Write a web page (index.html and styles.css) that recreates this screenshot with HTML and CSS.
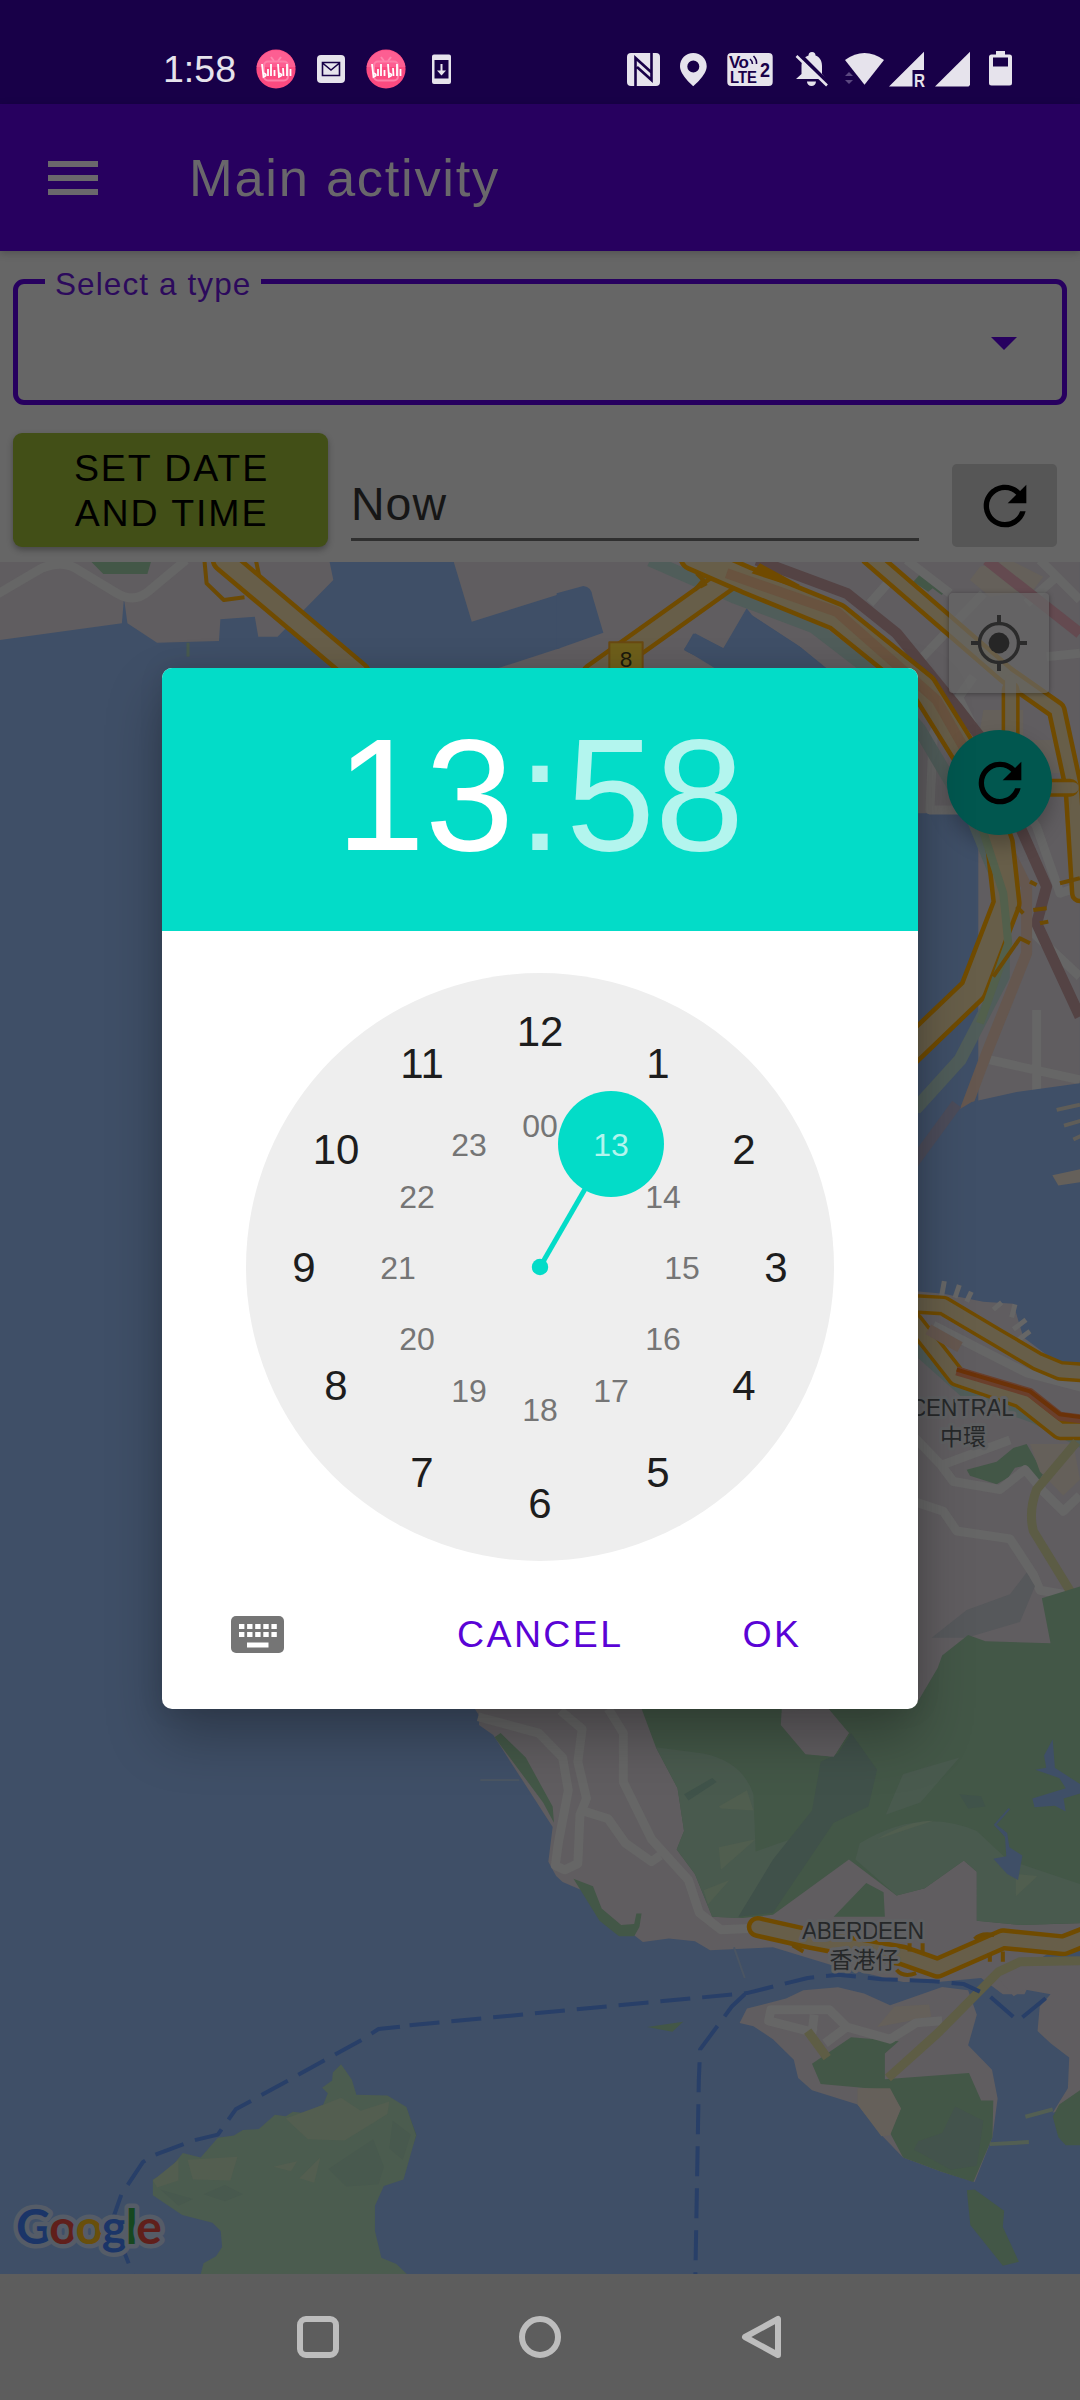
FILE: index.html
```html
<!DOCTYPE html>
<html lang="en">
<head>
<meta charset="utf-8">
<title>Main activity</title>
<link rel="stylesheet" href="styles.css">
</head>
<body>
<div class="screen">
  <header class="status-bar">
    <span class="clock">1:58</span>
    <div class="status-left">
      <svg width="54" height="50" viewBox="249 44 54 50">
        <g id="bili">
          <circle cx="276" cy="69" r="19.6" fill="#fb4a80"/>
          <path d="M256.6 67a19.6 19.6 0 0 1 38.800 0z" fill="#fd5e92"/>
          <path d="M271 57l3 4M281 57l-3 4" stroke="#fd86ad" stroke-width="2"/>
          <rect x="264" y="61.500" width="24" height="19" rx="4" fill="none" stroke="#fd7fa8" stroke-width="2"/>
          <path d="M262 64l1.500 13q5-2 0-4M268 69v7M271 64v12M274.500 70v6M278 64l1 13q5-2 0-4M283 68l.5 8M287 64v12M290.500 69v7" fill="none" stroke="#fff" stroke-width="1.800"/>
        </g>
      </svg>
      <svg width="56" height="50" viewBox="303 44 56 50">
        <rect x="317" y="55" width="28" height="28" rx="4" fill="#e6e3ec"/>
        <path d="M322.500 62.500h17v13h-17zM322.500 63l8.500 7 8.500-7" fill="none" stroke="#180048" stroke-width="1.600"/>
      </svg>
      <svg width="54" height="50" viewBox="249 44 54 50"><use href="#bili"/></svg>
      <svg width="60" height="50" viewBox="413 44 60 50">
        <path d="M434 54.500h15a2 2 0 0 1 2 2v25.500a2 2 0 0 1-2 2h-15a2 2 0 0 1-2-2V56.500a2 2 0 0 1 2-2zM434.500 60v18.500h14V60z" fill="#e6e3ec" fill-rule="evenodd"/>
        <path d="M441.500 64v8" stroke="#e6e3ec" stroke-width="2"/><path d="M437 70.500h9l-4.500 5z" fill="#e6e3ec"/>
      </svg>
    </div>
    <div class="status-right">
      <svg width="50" height="50" viewBox="620 44 50 50">
        <rect x="627" y="53" width="33" height="33" rx="4" fill="#e6e3ec"/>
        <path d="M635.500 86V58l15.500 14M651.500 53v27L637 67" fill="none" stroke="#180048" stroke-width="2.600"/>
      </svg>
      <svg width="50" height="50" viewBox="670 44 50 50">
        <path d="M693.300 53c-7.500 0-13.300 5.800-13.300 13.300 0 9 13.300 19.900 13.300 19.900s13.400-10.900 13.400-19.900c0-7.500-5.900-13.300-13.400-13.300zm0 7.500a6 6 0 1 1 0 12 6 6 0 0 1 0-12z" fill="#e6e3ec"/>
      </svg>
      <svg class="volte" width="66" height="50" viewBox="720 44 66 50">
        <rect x="727.300" y="53" width="45.400" height="33" rx="4" fill="#e6e3ec"/>
        <text x="729" y="68" font-size="17" textLength="20">Vo</text>
        <text x="730" y="82.500" font-size="16.500" textLength="27" lengthAdjust="spacingAndGlyphs">LTE</text>
        <text x="760" y="77" font-size="21" textLength="10" lengthAdjust="spacingAndGlyphs">2</text>
        <path d="M750 59q2.500 2 2.500 5M753.500 56q3.500 3.500 3 8" fill="none" stroke="#180048" stroke-width="1.600"/>
      </svg>
      <svg width="50" height="50" viewBox="786 44 50 50">
        <path d="M796 79h30l-4-5V66c0-6-3-9.500-6.500-10.500a3.500 3.500 0 0 0-7 0C804 57 801.500 61 801.500 66v8z" fill="#e6e3ec"/>
        <path d="M807 81.500h9a4.500 4.500 0 0 1-9 0z" fill="#e6e3ec"/>
        <path d="M798.500 53.500l31 31" stroke="#180048" stroke-width="4"/>
        <path d="M796.500 56l30.500 29.500" stroke="#e6e3ec" stroke-width="2.600"/>
      </svg>
      <svg width="52" height="50" viewBox="838 44 52 50">
        <path d="M866.500 84.700L847 60q19.500-14 39 0z" fill="#e6e3ec"/>
        <path d="M847 76l4-4 4 4zM847 80l4 4 4-4z" fill="#5b4880"/>
      </svg>
      <svg width="42" height="50" viewBox="890 44 42 50">
        <path d="M926 51.700V70H914.500V86.500H891z" fill="#e6e3ec"/>
        <text x="916" y="86.500" font-size="18" font-weight="bold" fill="#e6e3ec" textLength="11" lengthAdjust="spacingAndGlyphs">R</text>
      </svg>
      <svg width="50" height="50" viewBox="932 44 50 50">
        <path d="M972 51.700V85l-1.500 1.500H937z" fill="#e6e3ec"/>
      </svg>
      <svg width="40" height="50" viewBox="982 44 40 50">
        <path d="M998 51h9v3.500h4.500a2.500 2.500 0 0 1 2.500 2.500v26a2.500 2.500 0 0 1-2.500 2.500h-18a2.500 2.500 0 0 1-2.500-2.500V57a2.500 2.500 0 0 1 2.500-2.500h4.500zM995 57.500v9h15v-9z" fill="#e6e3ec" fill-rule="evenodd"/>
      </svg>
    </div>
  </header>

  <div class="app-bar">
    <div class="menu-icon"><i></i><i></i><i></i></div>
    <h1>Main activity</h1>
  </div>

  <section class="form">
    <div class="select">
      <span class="select-label">Select a type</span>
      <span class="arrow"></span>
    </div>
    <div class="row">
      <div class="date-button">SET DATE<br>AND TIME</div>
      <div class="date-field">Now</div>
      <div class="refresh">
        <svg width="64" height="64" viewBox="0 0 24 24"><path id="refresh-path" d="M17.650 6.350C16.200 4.900 14.210 4 12 4c-4.420 0-7.990 3.580-7.990 8s3.570 8 7.990 8c3.730 0 6.840-2.550 7.730-6h-2.080c-.82 2.330-3.040 4-5.650 4-3.310 0-6-2.690-6-6s2.690-6 6-6c1.660 0 3.140.69 4.220 1.780L13 11h7V4l-2.350 2.350z"/></svg>
      </div>
    </div>
  </section>

  <main class="map">
    <svg class="map-canvas" width="1080" height="1712" viewBox="0 562 1080 1712">
      <defs>
        <path id="bridge" d="M325 0L520 340"/>
        <path id="highway8" d="M500 60L100 345"/>
        <path id="coast-road" d="M400 -10L560 60L830 170L1090 380L1240 620L1320 850L1340 1030L1240 1290L1000 1520"/>
        <path id="inland-road" d="M930 -10L1340 345L1490 450L1540 680L1560 1000"/>
        <path id="central-road" d="M30 515L130 520L290 600L410 660L480 685L560 690"/>
        <path id="central-south" d="M40 560L170 700L360 755L480 835L560 835"/>
        <path id="aberdeen" d="M825 605L950 635L1050 655L1160 675L1240 705L1390 635L1530 650L1590 625"/>
      </defs>

      <!-- Tsing Yi and the container terminals -->
      <g transform="translate(0 560) scale(.6887 .3333)">
        <path class="land" d="M0 0H478L484 60L403 230L375 230L370 170L320 178L318 243L228 248L185 190L180 115L177 190L0 240z"/>
        <path class="land" d="M658 0H1000L1080 100L1060 260L1000 215L990 270L1060 330H715L876 222L855 75L685 185z"/>
        <path class="park" d="M130 0H220L214 42H150z"/>
        <path class="street w12" d="M-10 110L60 25Q90 0 110 25L170 100Q195 130 215 95L270 0M840 0L870 40L925 5M895 45L925 240"/>
        <path class="green-line" d="M273 248V290"/>
        <path class="edge-line" d="M297 5L300 70L325 120L355 112M372 5L376 45L355 80"/>
        <use href="#bridge" class="edge e26"/><use href="#bridge" class="fill f18"/>
      </g>

      <!-- Kowloon -->
      <g transform="translate(560 560) scale(.3333)">
        <path class="land" d="M550 0H1560V2300L1440 2370L1160 2400L1000 2600V2040H1255V760H1060L1000 500L800 325L720 260L575 165L490 265L400 220L372 270L470 330H100L0 300V0z"/>
        <path class="water" d="M560 145L490 265L405 220L372 268L470 328H800L720 260L580 170z"/>
        <path class="water" d="M-10 100L70 78Q95 80 98 110L130 218L-10 268z"/>
        <path class="park" d="M1060 65L1090 32L1155 95L1145 105L1118 85L1105 95z"/>
        <path class="block" d="M1260 20L1230 60L1290 110L1420 90L1450 50L1350 0zM1270 450h120v90h150l-30 100h-90L1260 510z"/>
        <path class="street w12" d="M1040 0L1170 100M930 130L1010 40M1560 120L1490 50L1400 130M1080 300L1270 100M1490 50L1440 0M1240 350L1120 520L1110 750H1250M1460 290L1560 280M1200 420L1260 540L1430 800L1500 1000L1560 980M1400 1100L1560 1250M1430 1350V1900M1290 1500L1560 1560M1180 1860L1560 1890"/>
        <path class="rail-teal" d="M270 0L520 110L760 200L930 330L1080 510L1240 780L1330 1000L1330 1250L1200 1500L1000 1720"/>
        <path class="rail-brown" d="M590 0L860 100L1010 220L1190 440L1260 530L1380 800L1460 980L1430 1090L1560 1370"/>
        <path class="rail-red" d="M1280 0L1560 220"/>
        <path class="rail-tan" d="M1310 800L1400 980L1400 1180L1280 1480L1160 1800L1000 2050"/>
        <use href="#highway8" class="edge e26"/><use href="#highway8" class="fill f18"/>
        <use href="#coast-road" class="edge e30"/><use href="#coast-road" class="fill f22"/>
        <path class="tan-road" d="M500 40L830 155L1130 420L1210 560"/>
        <path class="teal-over" d="M1265 800L1330 1000L1345 1150L1260 1390"/>
        <use href="#inland-road" class="edge e20"/><use href="#inland-road" class="fill f12"/>
        <path class="edge e18" d="M1352 390V560M1470 683H1530"/><path class="fill f12" d="M1352 360V570M1470 683H1540"/>
        <path class="edge-line" d="M410 40L430 60L405 90M440 70L420 80M1300 1250L1380 1135L1410 1150M1370 1040L1390 1060M1500 970L1560 955M1410 965L1430 975M1420 1050L1460 1045M1440 1090L1465 1085"/>
        <path d="M600 10L720 75L700 80L575 40z" fill="#704a00"/>
        <path d="M148 247H248V330H148z" fill="#6e5f1b" stroke="#694911" stroke-width="2"/>
        <text x="198" y="322" font-size="68" text-anchor="middle" fill="#1b1a0d">8</text>
      </g>

      <!-- Victoria Harbour and Central -->
      <g transform="translate(900 1100) scale(.3333 .3954)">
        <path class="water" d="M0 33H160L215 5L350 -20L560 -45V700H480L370 640L300 590L180 520L0 480z"/>
        <path class="rail-tan faint" d="M40 160L170 10"/>
        <path class="street-tan w4" d="M470 25L540 12M492 65L545 52M520 100L550 88"/>
        <path class="block" d="M457 190L540 175V208L475 216z"/>
        <path class="land" d="M0 480L130 490L250 510L340 515L370 600L480 670L560 680V1700H0z"/>
        <path class="street w6" d="M125 495L133 458M165 500L178 468M200 510L214 485M280 530L305 512M335 550L345 517M340 580L378 556M350 610L390 585"/>
        <path class="rail-teal" d="M40 620L200 740L400 800L560 870"/>
        <path class="street w12" d="M100 570L380 690L560 730"/>
        <use href="#central-road" class="edge e20"/><use href="#central-road" class="fill f14"/>
        <use href="#central-south" class="edge e20"/><use href="#central-south" class="fill f14"/>
        <path d="M170 685L390 740L480 800L560 808" fill="none" stroke="#6a3f2c" stroke-width="9"/>
        <path d="M170 682L390 737L480 795L560 804" fill="none" stroke="#6b3208" stroke-width="4"/>
        <path class="rail-tan" d="M85 580L180 625"/>
        <path class="park" d="M200 935L290 915L340 880L380 870L430 945L415 965L375 925L345 930L325 955L290 972L210 950z"/>
        <path class="block" d="M390 870L520 870L540 960L490 1000L420 940z"/>
        <path class="street w14" d="M40 850L120 920L160 965L300 985L375 935L430 990L490 1040L540 1000M120 925L330 860M40 1015L130 1040L170 1090L330 1110L400 1200L420 1240L560 1260"/>
        <path d="M530 865L410 985Q385 1040 400 1090L560 1310" fill="none" stroke="#5c5c45" stroke-width="9"/>
        <path d="M95 1360L200 1290L330 1250L380 1195L405 1230L360 1320L200 1360z" fill="#56585b"/>
      </g>

      <!-- Hong Kong Island -->
      <g transform="translate(400 1680) scale(.4337 .4082)">
        <path class="land" d="M160 50H1600V600L1480 680L1440 770L1390 770L1340 730L1240 740L1160 740L1000 700L860 655L715 662L680 640L620 633L560 642L540 625L460 580L430 520L375 495L360 480L342 445L352 360L215 135L182 110L183 88z"/>
        <path class="park" d="M550 50H880V110L935 180L1000 188L1035 130L980 60H1190L1240 -30L1250 -60L1310 -110L1350 -95L1500 -90L1480 -200L1600 -240V595L1430 600L1330 590V470L1300 442L1210 510L1145 528L1035 440L860 575L790 583L720 580L680 475L638 415L655 370L640 265L590 165z"/>
        <path d="M590 165L700 180Q790 200 815 280L820 420L900 390L780 583L720 580L680 475L638 415L655 370L640 265zM1060 400Q1200 310 1330 370L1400 440L1568 500V595L1430 600L1330 590V470L1300 442L1210 510L1145 528L1050 440zM1290 190L1200 300L1120 330L1160 230z" fill="#495a4e"/>
        <path d="M1040 130L1100 220L1080 310L1000 350L860 570L780 580L860 440L950 320L970 200L1010 180z" fill="#40514a"/>
        <path d="M1290 280l50 5l10 25l-40 5zM655 280L720 240L730 250L665 295z" fill="#40534a"/>
        <path d="M735 410L820 390L740 465zM700 515L760 490L710 550zM735 310L800 270L815 320L740 315zM1100 390Q1170 345 1230 345L1130 380zM1420 475l50 5l-50 50z" fill="#505e4f"/>
        <path class="land" d="M880 80L975 70L1035 130L1000 188L935 182L878 110z"/>
        <path class="park" d="M232 130L290 190L352 310L355 350L330 300L218 140zM400 487L445 505L465 560L510 600L540 598L545 572H557L552 605L540 628L505 628L460 590zM1000 580L1075 497L1115 520L1118 580z"/>
        <path class="water" d="M1505 145L1485 185L1490 215L1465 220L1520 240L1535 265L1458 290L1463 312L1510 308L1535 322L1530 290L1568 278V255L1510 215zM1370 350L1400 375L1405 410L1435 430L1425 490L1400 475L1368 438L1398 432L1395 385z"/>
        <path d="M1405 315L1372 355L1395 380" fill="none" stroke="#3f4f67" stroke-width="2"/>
        <path class="street w12" d="M180 90L320 130L375 190L388 270L365 400L358 455L380 465L410 450L415 330L430 290L410 200L420 120L370 75M480 70L515 130L515 250L580 390L665 490L690 570L740 612L820 608M420 320L480 340L520 400L580 445L600 430"/>
        <path d="M770 655L795 730M185 245H275" fill="none" stroke="#4a5563" stroke-width="2"/>
        <use href="#aberdeen" class="edge e22"/><use href="#aberdeen" class="fill f14"/>
        <path class="edge-line" d="M905 650L930 665M1145 710Q1160 730 1190 718M1325 635Q1340 618 1370 625M1205 645V670M1175 645V665M1360 690V670M1390 690V665"/>

        <!-- Ap Lei Chau -->
        <path class="land" d="M783 840L800 805L890 780L930 760L1010 753L1070 768L1130 797L1250 752L1310 760L1330 820L1310 895L1365 955L1378 1025L1366 1120L1325 1230L1250 1205L1160 1170L1115 1120L1055 1040L950 1005L918 975L908 930L860 880L815 848z"/>
        <path class="land" d="M1370 720L1420 690L1568 680V1040L1505 1060L1540 1000L1543 925L1500 890L1470 860L1475 800L1500 770L1440 758L1415 775z"/>
        <path class="park" d="M950 940L1040 875L1150 885L1118 915V978L1312 963L1340 1030H1368L1366 1120L1322 1230L1250 1205L1160 1170L1130 1110L1155 1050L1130 1005L970 990z"/>
        <path d="M1280 1045L1345 1080L1330 1190L1270 1200L1185 1150L1195 1130L1250 1110z" fill="#43534c"/>
        <path class="block" d="M1055 1000H1130L1155 1050L1130 1115L1110 1118L1055 1040zM1100 850L1140 800L1220 795L1225 825z"/>
        <path class="street w12" d="M960 865L850 835L855 808H990L1030 850L1130 880L1190 840L1250 835M950 865L955 820M980 890L1030 850"/>
        <path d="M1125 975L1240 865L1380 715L1430 690L1568 688M940 860L985 925" fill="none" stroke="#5e5d45" stroke-width="9"/>
        <path class="park" d="M1307 1250L1325 1248L1393 1300L1390 1340L1427 1425L1390 1435L1315 1335zM570 850L653 837L628 862zM1568 1005L1520 1040L1505 1070L1518 1120L1535 1140H1568zM0 1040L15 1050L38 1115L0 1225z"/>
        <path d="M1360 1137L1450 1132M1442 1070L1505 1052" fill="none" stroke="#535f53" stroke-width="4"/>
        <path class="ferry" d="M22 846L800 767L940 730L1010 722L1110 733L1230 738L1300 745L1360 775L1425 835L1500 770M795 770L765 800L692 905L689 980L681 1460"/>
      </g>

      <!-- Lamma Island -->
      <g transform="translate(0 1680) scale(.3571 .4592)">
        <path class="park2" d="M562 1294L570 1270L605 1255L622 1235L618 1200L595 1182L510 1165L428 1122V1088L470 1070L512 1030L562 1040L610 997L655 992L680 980L725 978L770 947L800 950L820 940L850 943L905 925L918 900L902 888L930 872L932 855L955 837L985 870L998 903L1085 905L1138 930L1165 992L1130 1088L1075 1102L1050 1145V1200L1068 1258L1110 1272L1140 1294z"/>
        <path d="M800 955L905 925L955 910L1010 938L1090 918L1085 945L965 1003L862 1000zM525 1045L665 1038L645 1090L540 1088zM765 1060L832 1048L815 1070zM838 1085L897 1040L880 1095zM428 1090L500 1045V1090L440 1105z" fill="#535e50"/>
        <path d="M920 1065L1045 1000L1075 1060L1060 1098L970 1103zM450 1110L540 1130L500 1145zM1100 960L1150 990L1128 1045L1090 1020zM570 1120l60-20l50 20l-50 15z" fill="#48594e"/>
        <path class="ferry" d="M1120 755L1060 760L1010 785L660 935L610 990L540 1003L430 1035L400 1050L340 1120L320 1165L330 1210L375 1300"/>
      </g>

      <g class="place">
        <text x="962" y="1416" textLength="104">CENTRAL</text>
        <text x="963" y="1445">中環</text>
        <text x="863" y="1939" textLength="122">ABERDEEN</text>
        <text x="864" y="1968">香港仔</text>
      </g>
      <text class="logo" x="16" y="2244" textLength="146"><tspan fill="#1b3568">G</tspan><tspan fill="#601f1b">o</tspan><tspan fill="#694f0b">o</tspan><tspan fill="#1b3568">g</tspan><tspan fill="#16471f">l</tspan><tspan fill="#601f1b">e</tspan></text>
    </svg>
    <div class="locate">
      <svg width="56" height="56" viewBox="0 0 56 56"><circle cx="28" cy="28" r="19.500" fill="none" stroke="#2b2b2b" stroke-width="3.400"/><circle cx="28" cy="28" r="10.400" fill="#262626"/><path d="M28 0v8M28 48v8M0 28h8M48 28h8" stroke="#2b2b2b" stroke-width="4"/></svg>
    </div>
    <div class="fab"><svg width="64" height="64" viewBox="0 0 24 24"><use href="#refresh-path"/></svg></div>
  </main>

  <nav class="nav-bar">
    <svg width="44" height="50" viewBox="297 2312 44 50"><rect x="301" y="2319" width="36" height="36" rx="6" fill="none" stroke="#bdbdbd" stroke-width="6"/></svg>
    <svg width="44" height="50" viewBox="518 2312 44 50"><circle cx="540" cy="2337" r="18" fill="none" stroke="#bdbdbd" stroke-width="6"/></svg>
    <svg width="44" height="50" viewBox="741 2312 44 50"><path d="M746 2337L779 2319V2355z" fill="none" stroke="#bdbdbd" stroke-width="6" stroke-linejoin="round"/></svg>
  </nav>

  <div class="dialog">
    <div class="time"><span class="hour">13</span><span class="colon">:</span><span class="minute">58</span></div>
    <div class="picker">
      <svg class="dial" width="588" height="588" viewBox="-294 -294 588 588">
        <circle r="294" fill="#eee"/>
        <g class="outer">
          <text x="0" y="-221">12</text><text x="118" y="-189">1</text><text x="204" y="-103">2</text>
          <text x="236" y="15">3</text><text x="204" y="133">4</text><text x="118" y="220">5</text>
          <text x="0" y="251">6</text><text x="-118" y="220">7</text><text x="-204" y="133">8</text>
          <text x="-236" y="15">9</text><text x="-204" y="-103">10</text><text x="-118" y="-189">11</text>
        </g>
        <g class="inner">
          <text x="0" y="-130">00</text><text x="123" y="-59">14</text><text x="142" y="12">15</text>
          <text x="123" y="83">16</text><text x="71" y="135">17</text><text x="0" y="154">18</text>
          <text x="-71" y="135">19</text><text x="-123" y="83">20</text><text x="-142" y="12">21</text>
          <text x="-123" y="-59">22</text><text x="-71" y="-111">23</text>
        </g>
        <path d="M0 0L71-123" stroke="#03dcc8" stroke-width="5"/>
        <circle r="8.200" fill="#03dcc8"/>
        <circle cx="71" cy="-123" r="53" fill="#03dcc8"/>
        <g class="inner chosen"><text x="71" y="-111">13</text></g>
      </svg>
    </div>
    <div class="actions">
      <svg class="keyboard" width="53" height="37" viewBox="0 0 53 37">
        <rect width="53" height="37" rx="5" fill="#757575"/>
        <path d="M8 10.500h38M8 18.500h38" stroke="#fff" stroke-width="5.200" stroke-dasharray="5.400 2.700"/>
        <path d="M16 29h21.500" stroke="#fff" stroke-width="5"/>
      </svg>
      <span class="cancel">CANCEL</span>
      <span class="ok">OK</span>
    </div>
  </div>
</div>
</body>
</html>
```
FILE: styles.css
```css
* { box-sizing: border-box; }
body {
  margin: 0;
  font-family: "Liberation Sans", "Noto Sans CJK TC", sans-serif;
  background: #666;
}
svg { display: block; flex: none; }
.screen {
  position: relative;
  width: 1080px;
  height: 2400px;
  overflow: hidden;
  display: flex;
  flex-direction: column;
}
.status-bar {
  height: 104px;
  background: #180048;
  display: flex;
  align-items: flex-start;
  padding: 44px 60px 0 163px;
}
.clock { width: 86px; font-size: 37.5px; line-height: 50px; color: #e6e3ec; }
.status-left, .status-right { display: flex; }
.status-right { margin-left: auto; }
.volte { font-weight: bold; }
.volte text { fill: #180048; }

.app-bar {
  position: relative;
  z-index: 1;
  height: 147px;
  background: #27005f;
  display: flex;
  align-items: center;
  padding-left: 48px;
  box-shadow: 0 2px 8px rgba(0, 0, 0, .22);
}
.menu-icon { width: 50px; display: grid; gap: 8.5px; margin-bottom: -1px; }
.menu-icon i { height: 5.5px; background: #6a686c; }
.app-bar h1 {
  margin: 0 0 0 91px;
  font-size: 52.5px;
  line-height: 60px;
  font-weight: 400;
  letter-spacing: 1.7px;
  color: #69676b;
}

.form {
  height: 311px;
  background: #666;
  padding: 28px 13px 0;
}
.select {
  position: relative;
  height: 126px;
  border: 5px solid #27005f;
  border-radius: 11px;
  display: flex;
  align-items: center;
  justify-content: flex-end;
  padding-right: 45px;
}
.select-label {
  position: absolute;
  left: 27px;
  top: -18px;
  padding: 0 10px 0 10px;
  font-size: 31.5px;
  line-height: 36px;
  letter-spacing: 1.1px;
  color: #2c0a5c;
  background: #666;
}
.arrow {
  border: 13px solid transparent;
  border-top-color: #27005f;
  border-bottom: 0;
  margin-top: 2px;
}
.row { display: flex; align-items: flex-end; margin-top: 28px; }
.date-button {
  width: 315px;
  height: 114px;
  padding: 13px 0 0 2px;
  border-radius: 9px;
  background: #424f17;
  box-shadow: 0 3px 6px rgba(0, 0, 0, .3);
  font-size: 37.5px;
  line-height: 45px;
  letter-spacing: 1.9px;
  text-align: center;
  color: #000;
}
.date-field {
  width: 568px;
  height: 66px;
  margin: 0 33px 6px 23px;
  border-bottom: 3px solid #2f2f2f;
  padding: 6px 0 0 0;
  font-size: 46.5px;
  line-height: 46px;
  letter-spacing: 1px;
  color: #161616;
}
.refresh {
  width: 105px;
  height: 83px;
  border-radius: 5px;
  background: #565656;
  display: flex;
  align-items: center;
  justify-content: center;
}

.map { position: relative; height: 1712px; background: #3f4f67; overflow: hidden; }
.map-canvas path { vector-effect: non-scaling-stroke; stroke-linejoin: round; }
.land { fill: #605d60; }
.water { fill: #3f4f67; }
.park { fill: #435747; }
.park2 { fill: #4b5c4f; }
.block { fill: #65605a; }
.street, .street-tan { fill: none; stroke: #666; }
.street-tan { stroke: #5f5d58; }
.green-line { fill: none; stroke: #485a4f; stroke-width: 3; }
.w4 { stroke-width: 4; }
.w6 { stroke-width: 5; }
.w12 { stroke-width: 9; }
.w14 { stroke-width: 9; }
.edge { fill: none; stroke: #704b00; stroke-linecap: round; }
.fill { fill: none; stroke: #675e49; stroke-linecap: round; }
.edge-line { fill: none; stroke: #6c4a04; stroke-width: 4; }
.e18 { stroke-width: 18; }
.e20 { stroke-width: 20; }
.e22 { stroke-width: 22; }
.e26 { stroke-width: 26; }
.e30 { stroke-width: 30; }
.f12 { stroke-width: 11; }
.f14 { stroke-width: 13; }
.f18 { stroke-width: 17; }
.f22 { stroke-width: 21; }
.rail-teal { fill: none; stroke: #505d5a; stroke-width: 13; }
.rail-brown { fill: none; stroke: #544344; stroke-width: 11; }
.rail-red { fill: none; stroke: #644a50; stroke-width: 11; }
.rail-tan { fill: none; stroke: #65574f; stroke-width: 11; }
.faint { stroke: #4c4c5a; }
.tan-road { fill: none; stroke: #69533f; stroke-width: 10; }
.teal-over { fill: none; stroke: #52604c; stroke-width: 8; }
.ferry { fill: none; stroke: #283f68; stroke-width: 4; stroke-dasharray: 30 12; }
.place text {
  font-size: 23px;
  text-anchor: middle;
  fill: #262829;
  stroke: #5f6062;
  stroke-width: 6px;
  stroke-linejoin: round;
  paint-order: stroke;
}
.logo {
  font-family: Lato, sans-serif;
  font-size: 48px;
  font-weight: 700;
  stroke: #555c67;
  stroke-width: 9px;
  stroke-linejoin: round;
  paint-order: stroke;
}
.locate {
  position: absolute;
  left: 949px;
  top: 31px;
  width: 100px;
  height: 100px;
  border-radius: 4px;
  background: rgba(102, 102, 102, .7);
  box-shadow: 0 1px 5px rgba(0, 0, 0, .35);
  display: flex;
  align-items: center;
  justify-content: center;
}
.fab {
  position: absolute;
  left: 947px;
  top: 168px;
  width: 105px;
  height: 105px;
  border-radius: 50%;
  background: #01574f;
  box-shadow: 0 10px 20px rgba(0, 0, 0, .25);
  display: flex;
  align-items: center;
  justify-content: center;
}

.nav-bar {
  height: 126px;
  background: #5d5d5d;
  display: flex;
  justify-content: space-between;
  align-items: center;
  padding: 0 296px 0 296px;
}

.dialog {
  position: absolute;
  left: 162px;
  top: 668px;
  width: 756px;
  height: 1041px;
  border-radius: 10px;
  overflow: hidden;
  background: #fff;
  box-shadow: 0 28px 55px rgba(0, 0, 0, .27), 0 0 25px rgba(0, 0, 0, .1);
  z-index: 2;
}
.time {
  height: 263px;
  background: #03dcc8;
  display: flex;
  justify-content: center;
  font-size: 160px;
  line-height: 184px;
  padding-top: 35px;
  color: #b3f5ee;
}
.hour { color: #fff; }
.colon { width: 52px; text-align: center; }
.picker { display: flex; justify-content: center; padding-top: 42px; }
.outer text, .inner text { text-anchor: middle; }
.outer { font-size: 42px; fill: #1d1d1d; }
.inner { font-size: 32px; fill: #757575; }
.chosen { fill: #b3f5ee; }
.actions {
  display: flex;
  align-items: center;
  margin-top: 50px;
  padding-left: 69px;
  height: 46px;
  font-size: 37.5px;
  line-height: 46px;
  letter-spacing: 2.4px;
  color: #5a03d6;
}
.cancel { margin: 0 0 0 173px; }
.ok { margin: 0 0 0 119px; }
```
